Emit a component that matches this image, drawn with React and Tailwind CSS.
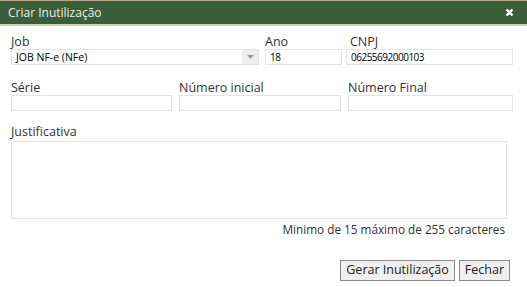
export default function App() {
  const font = { fontFamily: '"Open Sans", "Noto Sans", sans-serif' };
  const label = 'block text-[12.5px] leading-[15px] text-[#333]';
  const input = 'block h-[16px] w-full border border-[#e3e3e3] bg-white px-[4px] text-[10.5px] leading-[14px] text-black outline-none';
  const digits = input + ' text-[10px] tracking-[-0.5px]';
  const button = 'h-[21px] px-[5px] border border-[#8a8a8a] bg-[#f0f0f0] text-[12.5px] text-[#222] leading-none';

  return (
    <div className="w-[527px] h-[287px] bg-white flex flex-col" style={font}>
      <div className="h-[26px] bg-[#3a5e38] border-t border-[#b8a98a] border-b-2 border-b-[#c9d3b8] flex items-center justify-between pl-[8px] pr-[13px]">
        <span className="text-[12px] text-[#e8efe6]">Criar Inutilização</span>
        <svg width="9" height="9" viewBox="0 0 9 9">
          <path d="M1.5 1.5 L7.5 7.5 M7.5 1.5 L1.5 7.5" stroke="#fff" strokeWidth="2.4" />
        </svg>
      </div>

      <div className="flex flex-col px-[11px] pt-[8px]">
        <div className="flex">
          <div className="w-[248px]">
            <label className={label}>Job</label>
            <div className={input + ' flex items-center justify-between pr-0'}>
              <span>JOB NF-e (NFe)</span>
              <span className="h-full w-[16px] bg-[#eeeeee] flex items-center justify-center">
                <svg width="7" height="4" viewBox="0 0 7 4"><path d="M0 0 H7 L3.5 4 Z" fill="#999" /></svg>
              </span>
            </div>
          </div>
          <div className="w-[77px] ml-[6px]">
            <label className={label}>Ano</label>
            <input className={digits} defaultValue="18" />
          </div>
          <div className="w-[167px] ml-[4px]">
            <label className={label + ' pl-[4px]'}>CNPJ</label>
            <input className={digits} defaultValue="06255692000103" />
          </div>
        </div>

        <div className="flex gap-[7px] mt-[15px]">
          <div className="w-[161px]">
            <label className={label}>Série</label>
            <input className={input} />
          </div>
          <div className="w-[162px]">
            <label className={label}>Número inicial</label>
            <input className={input} />
          </div>
          <div className="w-[165px]">
            <label className={label}>Número Final</label>
            <input className={input} />
          </div>
        </div>

        <div className="mt-[13px]">
          <label className={label + ' mb-[2px]'}>Justificativa</label>
          <textarea className="block w-[496px] h-[78px] border border-[#e3e3e3] resize-none outline-none" />
        </div>

        <div className="text-right pr-[11px] mt-[2px] text-[11.75px] leading-[16px] text-[#333]">
          Minimo de 15 máximo de 255 caracteres
        </div>

        <div className="flex justify-end gap-[4px] mt-[23px] pr-[6px]">
          <button className={button}>Gerar Inutilização</button>
          <button className={button}>Fechar</button>
        </div>
      </div>
    </div>
  );
}
